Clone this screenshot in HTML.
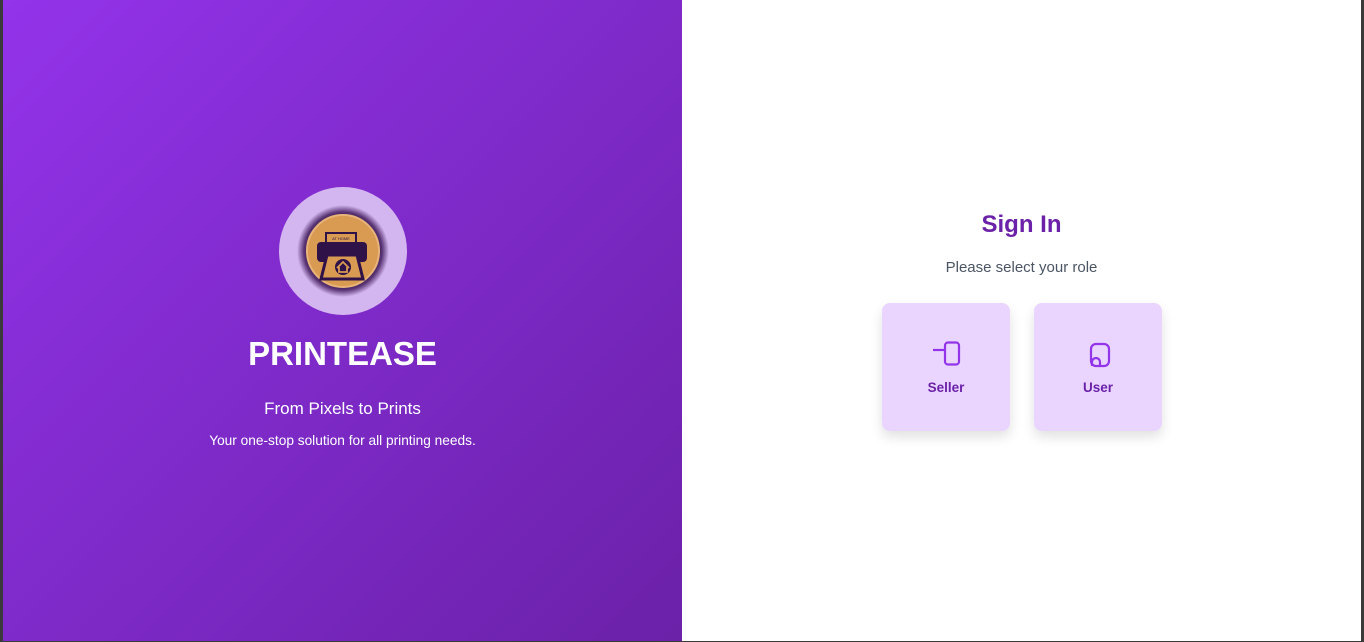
<!DOCTYPE html>
<html><head><meta charset="utf-8"><style>
*{margin:0;padding:0;box-sizing:border-box}
body{width:1364px;height:642px;background:#3a3a3a;position:relative;overflow:hidden;font-family:"Liberation Sans",sans-serif}
#left{position:absolute;left:3px;top:0;width:679px;height:641px;background:linear-gradient(135deg,#9333ea 0%,#7e2ac9 50%,#6b21a8 100%)}
#right{position:absolute;left:682px;top:0;width:679px;height:641px;background:#fff}
.c{position:absolute;left:0;width:100%;text-align:center;color:#fff;white-space:nowrap}
.card{position:absolute;top:303px;width:128px;height:128px;background:#e9d5ff;border-radius:8px;box-shadow:0 6px 12px rgba(0,0,0,.12)}
.card span{position:absolute;top:77px;left:0;width:100%;text-align:center;font-size:13.5px;font-weight:bold;color:#6b21a8}
</style></head><body>
<div id="left">
<svg style="position:absolute;left:276px;top:187px" width="128" height="128" viewBox="0 0 128 128">
<defs><radialGradient id="g" cx="50%" cy="50%" r="50%">
<stop offset="0.72" stop-color="#2e1248"/><stop offset="0.85" stop-color="#5a3575"/><stop offset="1" stop-color="#d3b6ef"/></radialGradient></defs>
<circle cx="64" cy="64" r="64" fill="#d3b6ef"/>
<circle cx="64" cy="64" r="46" fill="url(#g)"/>
<circle cx="64" cy="64" r="36" fill="#d99a52" stroke="#e8b47a" stroke-width="2"/>
<rect x="47" y="46" width="30" height="10" fill="#d99a52" stroke="#2e1248" stroke-width="2"/>
<text x="62" y="53" font-size="4" fill="#2e1248" text-anchor="middle" font-family="Liberation Sans">AT HOME</text>
<rect x="38" y="55" width="50" height="20" rx="4" fill="#2e1248"/>
<path d="M48 68 L78 68 L84 92 L42 92 Z" fill="#d99a52" stroke="#2e1248" stroke-width="3"/>
<circle cx="64" cy="80" r="8" fill="#2e1248"/>
<path d="M58 81 L64 75 L70 81 M60 80 V85 H68 V80" stroke="#d99a52" stroke-width="1.8" fill="none"/>
</svg>
<div class="c" style="top:335px;font-size:33px;font-weight:bold">PRINTEASE</div>
<div class="c" style="top:399px;font-size:17px">From Pixels to Prints</div>
<div class="c" style="top:433px;font-size:13.7px">Your one-stop solution for all printing needs.</div>
</div>
<div id="right">
<div class="c" style="top:211px;font-size:24px;font-weight:bold;color:#6b21a8">Sign In</div>
<div class="c" style="top:259px;font-size:15px;color:#4b5563">Please select your role</div>
<div class="card" style="left:200px">
<svg style="position:absolute;left:50px;top:38px" width="30" height="26" viewBox="0 0 30 26"><path d="M1 9 H14" stroke="#9333ea" stroke-width="2.2" fill="none"/><rect x="13" y="1.5" width="14" height="22" rx="3" stroke="#9333ea" stroke-width="2.2" fill="none"/></svg>
<span>Seller</span></div>
<div class="card" style="left:352px">
<svg style="position:absolute;left:55px;top:39px" width="24" height="26" viewBox="0 0 24 26"><rect x="2" y="2" width="18" height="22" rx="5" stroke="#9333ea" stroke-width="2.2" fill="none"/><path d="M3 24 V20 A4 4 0 0 1 11 20 V23" stroke="#9333ea" stroke-width="2.2" fill="none"/></svg>
<span>User</span></div>
</div>
</body></html>
